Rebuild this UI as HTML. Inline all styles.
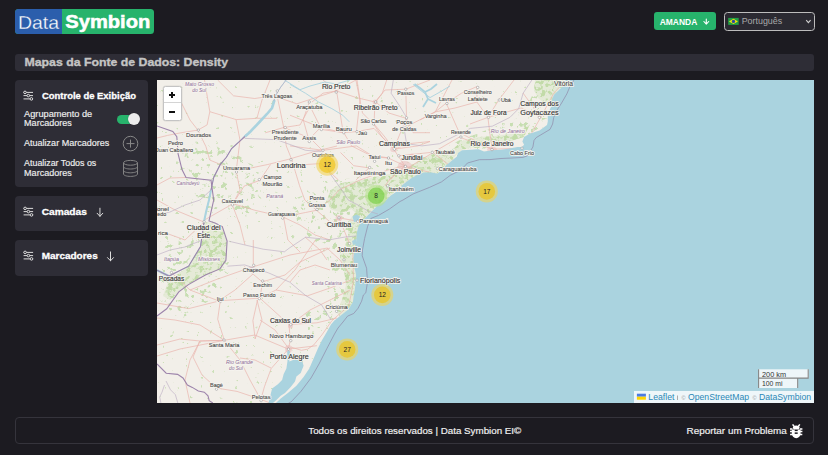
<!DOCTYPE html>
<html><head><meta charset="utf-8">
<style>
*{box-sizing:border-box;margin:0;padding:0}
html,body{width:828px;height:455px;overflow:hidden;background:#1c1b21;font-family:"Liberation Sans",sans-serif;color:#fff}
.a{position:absolute}
.tx{position:absolute;white-space:nowrap;line-height:1}
.card{background:#2e2d36;border-radius:4px;left:15px;width:133px}
#map{left:157px;top:80px;width:657px;height:323px;background:#f2efe9;overflow:hidden}
</style></head><body>
<div class="a" style="left:15px;top:9px;width:139px;height:25px;border-radius:3.5px;overflow:hidden;background:#27b36c"><div class="a" style="left:0;top:0;width:47px;height:25px;background:#2b5eac"></div></div><div class="a" style="left:654px;top:12px;width:62px;height:18px;border-radius:3px;background:#27b36c"></div><div class="a" style="left:724px;top:11.5px;width:91px;height:19.5px;border-radius:3.5px;border:1px solid #bdbdbd;background:#2b2a32"></div><div class="a" style="left:15px;top:54px;width:799px;height:17px;border-radius:3px;background:#2e2d36"></div><div class="a card" style="top:80px;height:107px"></div><div class="a card" style="top:196px;height:35px"></div><div class="a card" style="top:240px;height:36px"></div><div class="a" style="left:15px;top:417px;width:799px;height:27px;border:1px solid #35343c;border-radius:4px"></div><div class="a" style="left:116.5px;top:114.5px;width:21px;height:9px;border-radius:4.5px;background:#27b36c"></div><div class="a" style="left:128.3px;top:113.3px;width:11.4px;height:11.4px;border-radius:6px;background:#ececec;box-shadow:0 0 1px rgba(0,0,0,.4)"></div><div id="map" class="a">
<svg width="657" height="323" viewBox="157 80 657 323" style="position:absolute;left:0;top:0" font-family="Liberation Sans, sans-serif">
<defs><filter id="pt" color-interpolation-filters="sRGB" filterUnits="userSpaceOnUse" x="157" y="80" width="657" height="323"><feTurbulence type="fractalNoise" baseFrequency="0.22" numOctaves="3" seed="7" result="n"/><feColorMatrix in="n" type="matrix" values="0 0 0 0 0.76  0 0 0 0 0.86  0 0 0 0 0.66  9 0 0 0 -4.6" result="m"/><feComposite in="m" in2="SourceGraphic" operator="in"/></filter><filter id="pl" color-interpolation-filters="sRGB" filterUnits="userSpaceOnUse" x="157" y="80" width="657" height="323"><feTurbulence type="fractalNoise" baseFrequency="0.18" numOctaves="3" seed="11" result="n"/><feColorMatrix in="n" type="matrix" values="0 0 0 0 0.78  0 0 0 0 0.87  0 0 0 0 0.70  12 0 0 0 -7.4" result="m"/><feComposite in="m" in2="SourceGraphic" operator="in"/></filter><filter id="ps" color-interpolation-filters="sRGB" filterUnits="userSpaceOnUse" x="157" y="80" width="657" height="323"><feTurbulence type="fractalNoise" baseFrequency="0.2" numOctaves="3" seed="23" result="n"/><feColorMatrix in="n" type="matrix" values="0 0 0 0 0.80  0 0 0 0 0.88  0 0 0 0 0.72  16 0 0 0 -12" result="m"/><feComposite in="m" in2="SourceGraphic" operator="in"/></filter></defs>
<g filter="url(#ps)" fill="#000"><rect x="157" y="80" width="657" height="323"/></g>
<g filter="url(#pl)" fill="#000"><path d="M320,190 L335,180 L355,178 L375,172 L400,165 L430,155 L460,140 L500,125 L530,100 L540,80 L565,80 L547,125 L524,137 L456.9,156.6 L437.1,173.6 L402,185.2 L376.9,206.2 L356.9,232.3 L353.4,257.6 L354.3,292.8 L338.8,317 L310,340 L300,320 L320,300 L330,270 L320,245 L300,230 L290,200 Z"/><path d="M190,140 L230,150 L260,170 L270,200 L250,220 L215,215 L195,195 L180,170 Z"/><path d="M170,240 L200,235 L230,260 L210,300 L180,320 L160,300 L157,260 Z"/></g>
<g fill="#d8e6c6" opacity="0.5"><path d="M330.5,189.9 L341.1,182.9 L355.2,181.1 L365.7,179.3 L378,175.8 L390.3,174.1 L400,172.3 L412,170 L425,166 L437,167 L441.5,170.9 L437.1,173.6 L424,172.5 L410.8,178.6 L402,185.2 L390.8,195.4 L384.6,201.5 L376.9,206.2 L372.3,210.8 L367.7,215.4 L363.1,220 L358.5,226.2 L356.9,232.3 L356.2,241.5 L354.3,250.6 L353.4,257.6 L354.3,266.4 L356.1,275.2 L355.2,285.8 L354.3,292.8 L352.9,302 L347.6,309.9 L340,316 L336,312 L342,300 L346,285 L344,270 L340,258 L344,248 L348,238 L348.1,221.5 L355.2,212.7 L351.6,209.2 L341.1,212.7 L330.5,209.2 L327,200.4 Z"/><path d="M204,222 L215,223 L222,227 L227,241 L226,260 L220,269 L205.4,275 L188.4,284.6 L178.8,291.9 L170,300 L163,296 L168.9,280 L188.6,266.2 L200.5,246.5 Z"/><path d="M452,150 L462,141 L478,137 L495,136 L510,134 L522,129 L530,124 L524,137.1 L510,141 L495,143 L478,146 L462,150 L456,155 Z"/><path d="M535,80 L565,80 L557.7,91.2 L553.7,95.1 L551.8,100.4 L545,104 L538,98 L534,90 Z"/><path d="M400,172.3 L420,160 L440,150 L455,150 L458,153 L451.4,161 L441.5,170.9 L437.1,173.6 L424,172.5 L410.8,178.6 Z"/></g>
<g filter="url(#pt)" fill="#000"><path d="M330.5,189.9 L341.1,182.9 L355.2,181.1 L365.7,179.3 L378,175.8 L390.3,174.1 L400,172.3 L412,170 L425,166 L437,167 L441.5,170.9 L437.1,173.6 L424,172.5 L410.8,178.6 L402,185.2 L390.8,195.4 L384.6,201.5 L376.9,206.2 L372.3,210.8 L367.7,215.4 L363.1,220 L358.5,226.2 L356.9,232.3 L356.2,241.5 L354.3,250.6 L353.4,257.6 L354.3,266.4 L356.1,275.2 L355.2,285.8 L354.3,292.8 L352.9,302 L347.6,309.9 L340,316 L336,312 L342,300 L346,285 L344,270 L340,258 L344,248 L348,238 L348.1,221.5 L355.2,212.7 L351.6,209.2 L341.1,212.7 L330.5,209.2 L327,200.4 Z"/><path d="M204,222 L215,223 L222,227 L227,241 L226,260 L220,269 L205.4,275 L188.4,284.6 L178.8,291.9 L170,300 L163,296 L168.9,280 L188.6,266.2 L200.5,246.5 Z"/><path d="M452,150 L462,141 L478,137 L495,136 L510,134 L522,129 L530,124 L524,137.1 L510,141 L495,143 L478,146 L462,150 L456,155 Z"/><path d="M535,80 L565,80 L557.7,91.2 L553.7,95.1 L551.8,100.4 L545,104 L538,98 L534,90 Z"/><path d="M400,172.3 L420,160 L440,150 L455,150 L458,153 L451.4,161 L441.5,170.9 L437.1,173.6 L424,172.5 L410.8,178.6 Z"/></g>
<g fill="#ecc3c3" opacity="0.6"><ellipse cx="404.7" cy="166" rx="7" ry="5"/><ellipse cx="393.7" cy="149.2" rx="3.5" ry="3"/><ellipse cx="492" cy="149.6" rx="5" ry="3"/><ellipse cx="339" cy="218" rx="3.5" ry="3"/><ellipse cx="288.5" cy="349" rx="3.5" ry="4"/><ellipse cx="290.5" cy="326" rx="2.5" ry="2.5"/><ellipse cx="412" cy="156" rx="3" ry="2.5"/><ellipse cx="375" cy="102" rx="2.5" ry="2.5"/></g>
<g fill="none" stroke="#eab4ad" stroke-width="0.7" stroke-linejoin="round"><path d="M204.5,80 L209.8,111.7 L207.1,124.9 L197.9,130.1 L180.8,132.8 L167.6,135.4 L157,138"/><path d="M209.8,111.7 L236.2,119.6 L257.3,118.3 L277.1,118.3"/><path d="M217.7,80 L233.5,95.8 L254.7,98.5 L273.1,95.8 L296.9,103.8 L337,90.6"/><path d="M277.1,95.8 L283.7,127.5 L286.3,146 L291.6,159.2 L299.5,185.6 L304.8,200 L316.5,210.3 L331.9,223.5 L339,217.8"/><path d="M265.2,132.8 L283.7,127.5 L310.1,138.1 L323.3,151.3"/><path d="M310.1,106.4 L320.6,127.5 L310.1,138.1"/><path d="M289,159.2 L315.4,151.3 L337,146"/><path d="M236.2,171 L267.8,164.5 L289,159.2"/><path d="M259.9,180.3 L270.5,164.5"/><path d="M197.9,130.1 L206,146.8 L209.7,160 L236.2,171"/><path d="M233,203.7 L255,210.3 L283.5,216.9 L305.5,212.5 L316.5,210.3"/><path d="M202.2,221.3 L233,203.7 L244,186.2 L259.9,180.3"/><path d="M283.5,216.9 L287.9,240 L300,252"/><path d="M336.6,91 L356.4,97.6 L375,102"/><path d="M375,102 L374,124 L385,137.1 L393.7,149.2 L404.7,165.7"/><path d="M343.2,132.7 L356.4,131.6 L374,128.4 L393.7,149.2"/><path d="M320.6,127.5 L343.2,132.7"/><path d="M393.7,149.2 L417.9,145.9 L430,141.5"/><path d="M323,150.3 L356.4,145.9 L374,156.9 L388.2,158 L404.7,165.7"/><path d="M404.7,165.7 L389.3,180 L385,186"/><path d="M405.8,89.2 L406.5,117.8 L393.7,149.2"/><path d="M375,102 L385,90 L405.8,89.2 L430,80"/><path d="M357,80 L360,100 L356.4,131.6"/><path d="M476.9,86.6 L476.9,102 L487.9,117.4 L490.1,135 L492.3,149.2"/><path d="M446.2,103.1 L459.3,132.7 L492.3,149.2"/><path d="M404.4,170.1 L433,152.5 L459.3,137.1 L492.3,149.2"/><path d="M492.3,149.2 L523.1,148.1 L540.7,117.4 L553.8,93.2 L566,80"/><path d="M435.2,111.9 L446.2,103.1 L461.5,93.2 L476.9,86.6"/><path d="M400,130 L435.2,111.9 L452,80"/><path d="M498.9,99.8 L487.9,117.4"/><path d="M514,80 L498.9,99.8"/><path d="M433,152.5 L452.7,167.9"/><path d="M470,124 L487.9,117.4 L521,108 L540.7,117.4"/><path d="M420,120 L435.2,111.9 L455,108 L476.9,102"/><path d="M523,93 L540.7,117.4"/><path d="M359.3,240 L353,252 L353,266 L353.5,280 L351,295 L348.6,306 L332,320.5 L321.9,334.9 L313.6,345.1 L307.5,349.2 L301.3,350.3 L291,347"/><path d="M244.1,266.4 L253.3,274.3 L262.6,282.2 L259.9,298.1 L289,324.5 L290.3,340.3 L288.3,349.1"/><path d="M220.3,300.7 L259.9,298.1 L276,290 L295,270 L315.4,240"/><path d="M157,303 L188.7,308.6 L220.3,300.7"/><path d="M224.3,340.3 L254.7,335 L288.3,349.1"/><path d="M224.3,340.3 L217.7,319.2 L220.3,300.7"/><path d="M157,356 L180,349 L224.3,340.3"/><path d="M157,345 L180,339 L200,341 L224.3,340.3"/><path d="M255.2,338.8 L252.9,320.6 L257.5,300"/><path d="M253.3,240 L253.3,266.4"/><path d="M288.3,349.1 L271.2,368.5 L264.4,386.8 L260.9,399.4"/><path d="M216.4,388 L237,391.4 L260.9,399.4 L270,403"/><path d="M216.4,388 L202,375 L193,357 L200,341 L224.3,340.3"/><path d="M288.3,349.1 L316.9,345.7"/><path d="M289,324.5 L316.9,322.8 L337,318"/><path d="M327.4,248 L290,255 L243.7,269.9 L215,280 L190,290"/><path d="M351.3,279.9 L330,288 L307.5,295.8 L276,290"/><path d="M339,217.8 L349.5,243.6"/><path d="M339,217.8 L357.8,221.3"/><path d="M157,200 L175,210 L202.2,221.3"/><path d="M171.5,272.5 L190,290 L220.3,301.5"/><path d="M163,232 L185,240 L204,222"/><path d="M157,185 L170,178 L186,177.5"/><path d="M236.2,171 L240,190 L233,203.7"/><path d="M316.5,210.3 L330,200 L339,190 L360,180 L388,170 L404.7,165.7"/><path d="M336.6,91 L343.2,132.7"/><path d="M310.1,106.4 L300,125 L283.7,127.5"/><path d="M336.2,91 L355.9,80"/><path d="M336.2,91 L323,80"/><path d="M312,102 L323,93.2 L336.2,91"/><path d="M290,115.2 L312,124 L321.9,129.5"/><path d="M343.8,132.7 L351.5,145.9 L369.1,154.7 L388.9,158"/><path d="M355.9,80 L362.5,113 L373.5,124 L382.3,137.1 L394.4,149.2"/><path d="M386.7,80 L382.3,93.2 L375.7,102"/><path d="M375.7,102 L388.9,113 L406.5,118.5"/><path d="M394.4,149.2 L408.7,143.7 L430,141.5"/><path d="M398.8,155.8 L430,152.5"/><path d="M405.4,166.4 L430,172.3"/><path d="M405.4,166.4 L388.9,180"/><path d="M369.1,167.9 L355.9,180"/><path d="M290,145.9 L323,150.3"/><path d="M290,165.7 L320.8,163.5 L338.4,180"/><path d="M340.5,152.5 L353.7,165.7 L369.1,167.9"/><path d="M406.5,118.5 L413.1,132.7 L430,132.7"/><path d="M321.9,129.5 L343.8,132.7"/><path d="M309.3,102 L303.2,119.6 L309.3,141.5"/><path d="M157,318 L175,320 L200,325 L224,340"/><path d="M220,300 L235,290 L253,274"/><path d="M262,282 L285,275 L300,262 L315,255 L330,248"/><path d="M290,325 L310,310 L330,300 L350,290"/><path d="M257,300 L262,320 L255,339"/><path d="M200,341 L190,360 L185,380 L190,403"/><path d="M224,340 L240,360 L250,380 L261,400"/><path d="M271,368 L255,360 L240,358"/><path d="M289,349 L275,330 L260,320"/><path d="M327,248 L340,260 L350,275"/><path d="M305,237 L320,250 L327,260"/><path d="M290,282 L300,270 L315,265 L330,270"/><path d="M232,204 L240,225 L245,245"/><path d="M283,217 L300,225 L315,235 L330,240"/><path d="M257,118 L262,100 L270,80"/><path d="M180,100 L190,120 L197.9,130.1"/><path d="M236,119.6 L240,140 L236.2,171"/></g>
<g fill="none" stroke="#aad3df" stroke-width="0.9"><path d="M286.1,80 L280.8,87 L277.3,92.3 L273.8,101.1 L272,108.1 L266.8,113.4 L259.8,122.2 L251,131 L243.9,136.2 L240.4,140.6 L231.6,148.5 L226.4,157.3 L220.3,164.4 L213.7,177.5 L211,190 L209,200 L204,221.8 L200.5,246.5 L188.6,266.2 L168.9,276.1 L157,270.2"/><path d="M290,84.4 L305.4,93.2 L318.6,102 L331.8,108.6 L342.7,115.2 L349.3,121.8"/><path d="M284.4,80 L300,89.7 L310,86 L325,82 L336,84 L350,80"/><path d="M413,84.4 L430,97.6 L440,92 L450,86"/><path d="M414.5,84 L420,88 L425,92 L431,89 L437,84 M425,92 L428,99 L423,107 M428,99 L436,103" stroke-width="1.8"/><path d="M274.5,100 L272,108 L267,114 L259,122.5 L250,132 L245,136.5" stroke-width="2.6"/><path d="M211,190 L209,200 L206,212 L204,221.8" stroke-width="2"/><path d="M168.9,276.1 L157,270.2" stroke-width="2.2"/></g>
<path fill="#aad3df" d="M565,80 L563,85.9 L557.7,91.2 L553.7,95.1 L551.8,100.4 L552.4,104.4 L549.8,109.6 L547.8,114.9 L547.8,121.5 L547,125 L539.5,130.5 L529.6,133.8 L524.1,137.1 L522.4,141.5 L524.1,144.8 L521.9,147 L517.5,147 L509.8,148.6 L501,149.7 L492.2,150.3 L484,151.4 L478.5,149.2 L470.8,149.8 L462,150.3 L458,153 L456.9,156.6 L451.4,161 L446,165.4 L441.5,170.9 L437.1,173.6 L431.6,172.5 L424,172.5 L418.5,174.2 L410.8,178.6 L402,185.2 L400,189.2 L390.8,195.4 L384.6,201.5 L376.9,206.2 L372.3,210.8 L367.7,215.4 L363.1,220 L358.5,226.2 L356.9,232.3 L356.2,241.5 L354.3,250.6 L353.4,257.6 L354.3,266.4 L356.1,275.2 L355.2,285.8 L354.3,292.8 L353.7,295 L352.9,302 L350.2,306.4 L347.6,309.9 L343.2,313.5 L338.8,317 L334.4,320.5 L331,324.5 L326.5,332.6 L321.8,340.4 L317.9,348.5 L313.6,358.6 L309.3,368.6 L303.6,377.1 L296.4,385.7 L287.9,392.9 L280.7,398.6 L276.4,402.6 L276,403 L814,403 L814,80 Z"/>
<path fill="#aad3df" d="M288.6,350 L290,351.4 L289.3,361.4 L295,359.3 L302.1,360.7 L303.6,365.7 L300.7,372.9 L296.4,376.4 L295,381.4 L290.7,387.1 L285,392.9 L280.7,395.7 L276.4,400 L273,403 L268.5,403 L270.7,394.3 L272.1,388.6 L277.9,384.3 L282.1,380 L283.6,374.3 L286.4,368.6 L287.5,361 L287.2,351.4 Z"/>
<path fill="#aad3df" d="M352.5,216.5 L356.5,214.5 L360,216.5 L358.5,221 L354,222 Z M352,241 L356,239 L357,244 L353,245 Z"/>
<path fill="none" stroke="#8f8aa9" stroke-width="0.7" d="M574,80 L570.2,85.9 L566.9,93.8 L561.6,103 L556.4,111 L553.7,117.6 L552.6,124 L550,129.4 L536.2,137.6 L534,140.4 L532.9,147 L527.4,155.8 L523,157.4 L512,158 L501,158.5 L490,159.6 L479.4,159.7 L467.5,163 L460,170.9 L456.9,172 L450.3,175.3 L441.5,181.9 L429.5,187.4 L413,194 L403,200 L400,201.5 L389.2,209.2 L378.5,215.4 L370.8,218.5 L367.7,226.2 L364.6,238.5 L362.5,250 L362.2,255.8 L366.6,268.2 L367.5,282.2 L365.8,292.8 L363.4,295 L361.6,301.2 L358.1,308.2 L353.7,313.5 L347.6,316.1 L343,322 L338,328 L334.5,334 L327,348.3 L319,364 L311,378 L301,391.3 L291,402 L288.5,403"/>
<g fill="none" stroke="#9d84ab" stroke-width="1.1"><path d="M245,136.5 L240.4,140.6 L231.6,148.5 L226.4,157.3 L220.3,164.4 L213.7,177.5 L211,190"/><path d="M204,221.8 L200.5,246.5 L188.6,266.2 L168.9,276.1 L157,270.2"/><path d="M157,126 L172.8,131.4 L176.8,136.7 L178.1,153.8 L182,169.6 L186,177.5 L211,180.2 L213.7,200 L209,221 L215,223 L222.3,226.6 L227.1,241.1 L225.9,260.4 L219.9,268.9 L205.4,275 L188.4,284.6 L178.8,291.9 L166.7,308.8 L157,316"/><path d="M157,364 L166.2,373.2 L177.6,374.4 L183,378 L187.4,385 L192.3,387.4 L198.3,391 L204.3,392.2 L208,395.9 L209.2,400.7 L212.8,403"/></g>
<g fill="none" stroke="#b9a9c1" stroke-width="0.6"><path d="M164.5,385 L162,392.2 L159.7,397 L160.9,403"/><path d="M166,381 L170.5,389.8 L175.4,394.7 L177.8,403"/><path d="M286.1,80 L280.8,87 L277.3,92.3 L273.8,101.1"/><path d="M244.7,138.4 L260,139 L276.5,139.7 L295,146.3 L305.6,150.3 L321.5,151.6 L326,160 L329.5,172.8 L336,182 L342.8,191.3 L348.1,200 L358,205 L368,211 L378,214"/><path d="M228.8,241.2 L245,245 L263.2,249.2 L284.4,251.8 L289.7,247.8 L305.6,237.2 L329.5,239.8 L345,237 L356.2,236"/><path d="M227.4,266.2 L244.7,264.9 L268.6,272.9 L289.8,282.2 L305.6,295.5 L321.5,304.8 L326,312 L331,320"/><path d="M157,255 L170,250 L185,247 L200,241"/><path d="M157,215 L170,212 L185,205 L200,200 L211,190"/><path d="M393.3,80 L391.1,93.2 L399.9,106.4 L406.5,117.4 L404.4,130.5 L406.6,143.7 L422,145.9 L439.6,143.7 L457.1,134.9 L470.3,128.4 L492.3,126.2 L509.9,117.4 L518.7,108.6 L523.1,93.2 L531.9,80"/></g>
<g fill="#fff" stroke="#888" stroke-width="0.5"><circle cx="198.3" cy="130.1" r="1.2"/><circle cx="277.3" cy="90.9" r="1.2"/><circle cx="285.2" cy="127.5" r="1.2"/><circle cx="336.2" cy="92.1" r="1.2"/><circle cx="309.3" cy="102" r="1.2"/><circle cx="375.7" cy="102" r="1.2"/><circle cx="405.8" cy="89.2" r="1.2"/><circle cx="373.5" cy="124" r="1.2"/><circle cx="406.5" cy="117.8" r="1.2"/><circle cx="321.4" cy="129.5" r="1.2"/><circle cx="343.8" cy="132.7" r="1.2"/><circle cx="357" cy="131.6" r="1.2"/><circle cx="309.3" cy="141.5" r="1.2"/><circle cx="394.4" cy="149.2" r="1.2"/><circle cx="323" cy="150.3" r="1.2"/><circle cx="374.6" cy="161.3" r="1.2"/><circle cx="398.8" cy="155.8" r="1.2"/><circle cx="388.5" cy="158" r="1.2"/><circle cx="369.6" cy="167.5" r="1.2"/><circle cx="405.4" cy="166.4" r="1.2"/><circle cx="477.7" cy="87.4" r="1.2"/><circle cx="499.2" cy="100" r="1.2"/><circle cx="446.9" cy="103.5" r="1.2"/><circle cx="488.5" cy="117.4" r="1.2"/><circle cx="539.4" cy="117.4" r="1.2"/><circle cx="460.9" cy="137" r="1.2"/><circle cx="492" cy="149.6" r="1.2"/><circle cx="522" cy="148.2" r="1.2"/><circle cx="432.2" cy="152.3" r="1.2"/><circle cx="437.5" cy="168.6" r="1.2"/><circle cx="387.7" cy="185.8" r="1.2"/><circle cx="357.8" cy="221.3" r="1.2"/><circle cx="339" cy="217.8" r="1.2"/><circle cx="349.5" cy="243.6" r="1.2"/><circle cx="344" cy="259.8" r="1.2"/><circle cx="357" cy="280.2" r="1.2"/><circle cx="336.6" cy="311.3" r="1.2"/><circle cx="232.4" cy="204.8" r="1.2"/><circle cx="282.7" cy="218.1" r="1.2"/><circle cx="204.1" cy="221.8" r="1.2"/><circle cx="171.5" cy="272.5" r="1.2"/><circle cx="253.7" cy="265.3" r="1.2"/><circle cx="262.7" cy="281" r="1.2"/><circle cx="259.3" cy="298.6" r="1.2"/><circle cx="220.3" cy="301.5" r="1.2"/><circle cx="290.8" cy="324.7" r="1.2"/><circle cx="290.8" cy="340.7" r="1.2"/><circle cx="224" cy="340" r="1.2"/><circle cx="288.5" cy="349.2" r="1.2"/><circle cx="216.5" cy="389.2" r="1.2"/><circle cx="261.1" cy="400.7" r="1.2"/><circle cx="291" cy="159.7" r="1.2"/><circle cx="236.5" cy="172" r="1.2"/><circle cx="259.3" cy="179.6" r="1.2"/><circle cx="317" cy="209.5" r="1.2"/></g>
<g stroke="#f6f4ef" stroke-opacity="0.9" stroke-width="1.8" stroke-linejoin="round" text-anchor="middle"><text x="199.5" y="85.8" font-size="4.97" font-style="italic" textLength="29" lengthAdjust="spacingAndGlyphs" fill="#f6f4ef">Mato Grosso</text><text x="199.2" y="92.2" font-size="4.84" font-style="italic" textLength="14" lengthAdjust="spacingAndGlyphs" fill="#f6f4ef">do Sul</text><text x="198.6" y="136.5" font-size="5.67" textLength="25.1" lengthAdjust="spacingAndGlyphs" fill="#f6f4ef">Dourados</text><text x="175.5" y="145.0" font-size="5.51" textLength="15" lengthAdjust="spacingAndGlyphs" fill="#f6f4ef">Pedro</text><text x="174.6" y="151.9" font-size="5.39" textLength="37" lengthAdjust="spacingAndGlyphs" fill="#f6f4ef">Juan Caballero</text><text x="276.9" y="97.8" font-size="5.47" textLength="30.8" lengthAdjust="spacingAndGlyphs" fill="#f6f4ef">Três Lagoas</text><text x="285.2" y="134.2" font-size="5.54" textLength="27" lengthAdjust="spacingAndGlyphs" fill="#f6f4ef">Presidente</text><text x="285.2" y="140.3" font-size="5.55" textLength="23" lengthAdjust="spacingAndGlyphs" fill="#f6f4ef">Prudente</text><text x="336.2" y="89.0" font-size="6.70" textLength="28.5" lengthAdjust="spacingAndGlyphs" fill="#f6f4ef">Rio Preto</text><text x="309.3" y="109.0" font-size="5.65" textLength="26.3" lengthAdjust="spacingAndGlyphs" fill="#f6f4ef">Araçatuba</text><text x="375.7" y="109.9" font-size="6.75" textLength="44" lengthAdjust="spacingAndGlyphs" fill="#f6f4ef">Ribeirão Preto</text><text x="405.8" y="95.0" font-size="5.08" textLength="17" lengthAdjust="spacingAndGlyphs" fill="#f6f4ef">Passos</text><text x="373.5" y="122.6" font-size="5.15" textLength="26" lengthAdjust="spacingAndGlyphs" fill="#f6f4ef">São Carlos</text><text x="404.3" y="124.4" font-size="5.64" textLength="16" lengthAdjust="spacingAndGlyphs" fill="#f6f4ef">Poços</text><text x="404.3" y="131.4" font-size="5.22" textLength="24" lengthAdjust="spacingAndGlyphs" fill="#f6f4ef">de Caldas</text><text x="321.4" y="127.7" font-size="5.62" textLength="17.2" lengthAdjust="spacingAndGlyphs" fill="#f6f4ef">Marília</text><text x="343.8" y="130.9" font-size="5.88" textLength="16" lengthAdjust="spacingAndGlyphs" fill="#f6f4ef">Bauru</text><text x="362.5" y="134.7" font-size="5.47" textLength="9" lengthAdjust="spacingAndGlyphs" fill="#f6f4ef">Jaú</text><text x="309.3" y="140.3" font-size="5.74" textLength="14" lengthAdjust="spacingAndGlyphs" fill="#f6f4ef">Assis</text><text x="348.2" y="144.0" font-size="5.10" font-style="italic" textLength="24" lengthAdjust="spacingAndGlyphs" fill="#f6f4ef">São Paulo</text><text x="394.4" y="146.1" font-size="6.70" textLength="30.8" lengthAdjust="spacingAndGlyphs" fill="#f6f4ef">Campinas</text><text x="323" y="157.3" font-size="5.31" textLength="22" lengthAdjust="spacingAndGlyphs" fill="#f6f4ef">Ourinhos</text><text x="374.6" y="158.9" font-size="5.42" textLength="12" lengthAdjust="spacingAndGlyphs" fill="#f6f4ef">Tatuí</text><text x="412" y="159.7" font-size="6.38" textLength="21" lengthAdjust="spacingAndGlyphs" fill="#f6f4ef">Jundiaí</text><text x="388.5" y="165.1" font-size="6.17" textLength="7" lengthAdjust="spacingAndGlyphs" fill="#f6f4ef">Itu</text><text x="291.2" y="167.9" font-size="7.23" textLength="28.7" lengthAdjust="spacingAndGlyphs" fill="#f6f4ef">Londrina</text><text x="369.6" y="174.5" font-size="6.05" textLength="31.9" lengthAdjust="spacingAndGlyphs" fill="#f6f4ef">Itapetininga</text><text x="405.4" y="174.3" font-size="6.54" textLength="30.8" lengthAdjust="spacingAndGlyphs" fill="#f6f4ef">São Paulo</text><text x="563.5" y="85.8" font-size="6.61" textLength="19" lengthAdjust="spacingAndGlyphs" fill="#f6f4ef">Vitória</text><text x="477.7" y="93.9" font-size="5.14" textLength="28" lengthAdjust="spacingAndGlyphs" fill="#f6f4ef">Conselheiro</text><text x="477.7" y="100.6" font-size="5.51" textLength="20" lengthAdjust="spacingAndGlyphs" fill="#f6f4ef">Lafaiete</text><text x="505.9" y="101.9" font-size="5.34" textLength="10" lengthAdjust="spacingAndGlyphs" fill="#f6f4ef">Ubá</text><text x="446.9" y="100.8" font-size="5.22" textLength="16" lengthAdjust="spacingAndGlyphs" fill="#f6f4ef">Lavras</text><text x="488.5" y="114.6" font-size="6.45" textLength="36.2" lengthAdjust="spacingAndGlyphs" fill="#f6f4ef">Juiz de Fora</text><text x="539.4" y="106.4" font-size="6.69" textLength="38.3" lengthAdjust="spacingAndGlyphs" fill="#f6f4ef">Campos dos</text><text x="539.4" y="114.6" font-size="7.11" textLength="38.3" lengthAdjust="spacingAndGlyphs" fill="#f6f4ef">Goytacazes</text><text x="435.7" y="118.0" font-size="5.49" textLength="22" lengthAdjust="spacingAndGlyphs" fill="#f6f4ef">Varginha</text><text x="460.9" y="134.2" font-size="4.90" textLength="20" lengthAdjust="spacingAndGlyphs" fill="#f6f4ef">Resende</text><text x="507.8" y="132.7" font-size="5.17" font-style="italic" textLength="34" lengthAdjust="spacingAndGlyphs" fill="#f6f4ef">Rio de Janeiro</text><text x="492" y="146.1" font-size="6.57" textLength="43.2" lengthAdjust="spacingAndGlyphs" fill="#f6f4ef">Rio de Janeiro</text><text x="522" y="154.9" font-size="5.36" textLength="24" lengthAdjust="spacingAndGlyphs" fill="#f6f4ef">Cabo Frio</text><text x="445" y="154.3" font-size="5.51" textLength="20" lengthAdjust="spacingAndGlyphs" fill="#f6f4ef">Taubaté</text><text x="457.6" y="170.6" font-size="5.63" textLength="38" lengthAdjust="spacingAndGlyphs" fill="#f6f4ef">Caraguatatuba</text><text x="236.5" y="169.9" font-size="5.35" textLength="27" lengthAdjust="spacingAndGlyphs" fill="#f6f4ef">Umuarama</text><text x="272.4" y="179.2" font-size="5.47" textLength="18" lengthAdjust="spacingAndGlyphs" fill="#f6f4ef">Campo</text><text x="272.4" y="185.7" font-size="5.78" textLength="20" lengthAdjust="spacingAndGlyphs" fill="#f6f4ef">Mourão</text><text x="187.9" y="185.3" font-size="4.71" font-style="italic" textLength="23" lengthAdjust="spacingAndGlyphs" fill="#f6f4ef">Canindeyú</text><text x="401.2" y="190.6" font-size="5.90" textLength="25.1" lengthAdjust="spacingAndGlyphs" fill="#f6f4ef">Itanhaém</text><text x="274.8" y="198.3" font-size="5.17" font-style="italic" textLength="17" lengthAdjust="spacingAndGlyphs" fill="#f6f4ef">Paraná</text><text x="232.4" y="203.0" font-size="5.05" textLength="21.2" lengthAdjust="spacingAndGlyphs" fill="#f6f4ef">Cascavel</text><text x="317" y="200.4" font-size="5.63" textLength="15" lengthAdjust="spacingAndGlyphs" fill="#f6f4ef">Ponta</text><text x="317" y="206.9" font-size="5.17" textLength="17" lengthAdjust="spacingAndGlyphs" fill="#f6f4ef">Grossa</text><text x="281.5" y="215.5" font-size="4.81" textLength="27" lengthAdjust="spacingAndGlyphs" fill="#f6f4ef">Guarapuava</text><text x="373.6" y="223.4" font-size="5.75" textLength="28.7" lengthAdjust="spacingAndGlyphs" fill="#f6f4ef">Paranaguá</text><text x="339" y="227.0" font-size="7.00" textLength="24.6" lengthAdjust="spacingAndGlyphs" fill="#f6f4ef">Curitiba</text><text x="203.7" y="229.6" font-size="6.93" textLength="33.8" lengthAdjust="spacingAndGlyphs" fill="#f6f4ef">Ciudad del</text><text x="203.7" y="237.8" font-size="6.37" textLength="13" lengthAdjust="spacingAndGlyphs" fill="#f6f4ef">Este</text><text x="349" y="251.9" font-size="6.56" textLength="23.8" lengthAdjust="spacingAndGlyphs" fill="#f6f4ef">Joinville</text><text x="344" y="267.2" font-size="5.81" textLength="26.7" lengthAdjust="spacingAndGlyphs" fill="#f6f4ef">Blumenau</text><text x="326.7" y="285.2" font-size="4.41" font-style="italic" textLength="30" lengthAdjust="spacingAndGlyphs" fill="#f6f4ef">Santa Catarina</text><text x="380.2" y="282.5" font-size="6.95" textLength="40.2" lengthAdjust="spacingAndGlyphs" fill="#f6f4ef">Florianópolis</text><text x="336.6" y="309.1" font-size="5.56" textLength="22.4" lengthAdjust="spacingAndGlyphs" fill="#f6f4ef">Criciúma</text><text x="171.5" y="261.1" font-size="5.29" font-style="italic" textLength="15" lengthAdjust="spacingAndGlyphs" fill="#f6f4ef">Itapúa</text><text x="209" y="260.5" font-size="5.46" font-style="italic" textLength="22" lengthAdjust="spacingAndGlyphs" fill="#f6f4ef">Misiones</text><text x="171.5" y="281.4" font-size="6.37" textLength="25.3" lengthAdjust="spacingAndGlyphs" fill="#f6f4ef">Posadas</text><text x="253.7" y="272.0" font-size="5.34" textLength="21.8" lengthAdjust="spacingAndGlyphs" fill="#f6f4ef">Chapecó</text><text x="262.7" y="286.9" font-size="5.08" textLength="19" lengthAdjust="spacingAndGlyphs" fill="#f6f4ef">Erechim</text><text x="259.3" y="296.8" font-size="5.42" textLength="32.6" lengthAdjust="spacingAndGlyphs" fill="#f6f4ef">Passo Fundo</text><text x="220.3" y="300.5" font-size="5.14" textLength="7" lengthAdjust="spacingAndGlyphs" fill="#f6f4ef">Ijuí</text><text x="290.5" y="322.5" font-size="6.53" textLength="41.1" lengthAdjust="spacingAndGlyphs" fill="#f6f4ef">Caxias do Sul</text><text x="291.4" y="338.2" font-size="5.88" textLength="43.7" lengthAdjust="spacingAndGlyphs" fill="#f6f4ef">Novo Hamburgo</text><text x="224" y="346.6" font-size="5.58" textLength="30.7" lengthAdjust="spacingAndGlyphs" fill="#f6f4ef">Santa Maria</text><text x="239.4" y="363.7" font-size="5.17" font-style="italic" textLength="27" lengthAdjust="spacingAndGlyphs" fill="#f6f4ef">Rio Grande</text><text x="235.9" y="369.9" font-size="4.84" font-style="italic" textLength="14" lengthAdjust="spacingAndGlyphs" fill="#f6f4ef">do Sul</text><text x="289.2" y="358.5" font-size="6.96" textLength="39.1" lengthAdjust="spacingAndGlyphs" fill="#f6f4ef">Porto Alegre</text><text x="216.5" y="386.5" font-size="5.41" textLength="12.9" lengthAdjust="spacingAndGlyphs" fill="#f6f4ef">Bagé</text><text x="261.1" y="399.2" font-size="5.49" textLength="18.7" lengthAdjust="spacingAndGlyphs" fill="#f6f4ef">Pelotas</text><text x="163" y="210.7" font-size="6.22" textLength="12" lengthAdjust="spacingAndGlyphs" fill="#f6f4ef">onel</text><text x="161.8" y="216.4" font-size="5.29" textLength="9" lengthAdjust="spacingAndGlyphs" fill="#f6f4ef">edo</text><text x="163" y="234.8" font-size="6.08" textLength="10" lengthAdjust="spacingAndGlyphs" fill="#f6f4ef">rica</text></g><g text-anchor="middle"><text x="199.5" y="85.8" font-size="4.97" font-style="italic" textLength="29" lengthAdjust="spacingAndGlyphs" fill="#8e6e98">Mato Grosso</text><text x="199.2" y="92.2" font-size="4.84" font-style="italic" textLength="14" lengthAdjust="spacingAndGlyphs" fill="#8e6e98">do Sul</text><text x="198.6" y="136.5" font-size="5.67" textLength="25.1" lengthAdjust="spacingAndGlyphs" fill="#474747" stroke="#474747" stroke-width="0.08">Dourados</text><text x="175.5" y="145.0" font-size="5.51" textLength="15" lengthAdjust="spacingAndGlyphs" fill="#474747" stroke="#474747" stroke-width="0.08">Pedro</text><text x="174.6" y="151.9" font-size="5.39" textLength="37" lengthAdjust="spacingAndGlyphs" fill="#474747" stroke="#474747" stroke-width="0.08">Juan Caballero</text><text x="276.9" y="97.8" font-size="5.47" textLength="30.8" lengthAdjust="spacingAndGlyphs" fill="#474747" stroke="#474747" stroke-width="0.08">Três Lagoas</text><text x="285.2" y="134.2" font-size="5.54" textLength="27" lengthAdjust="spacingAndGlyphs" fill="#474747" stroke="#474747" stroke-width="0.08">Presidente</text><text x="285.2" y="140.3" font-size="5.55" textLength="23" lengthAdjust="spacingAndGlyphs" fill="#474747" stroke="#474747" stroke-width="0.08">Prudente</text><text x="336.2" y="89.0" font-size="6.70" textLength="28.5" lengthAdjust="spacingAndGlyphs" fill="#383838" stroke="#383838" stroke-width="0.15">Rio Preto</text><text x="309.3" y="109.0" font-size="5.65" textLength="26.3" lengthAdjust="spacingAndGlyphs" fill="#474747" stroke="#474747" stroke-width="0.08">Araçatuba</text><text x="375.7" y="109.9" font-size="6.75" textLength="44" lengthAdjust="spacingAndGlyphs" fill="#383838" stroke="#383838" stroke-width="0.15">Ribeirão Preto</text><text x="405.8" y="95.0" font-size="5.08" textLength="17" lengthAdjust="spacingAndGlyphs" fill="#474747" stroke="#474747" stroke-width="0.08">Passos</text><text x="373.5" y="122.6" font-size="5.15" textLength="26" lengthAdjust="spacingAndGlyphs" fill="#474747" stroke="#474747" stroke-width="0.08">São Carlos</text><text x="404.3" y="124.4" font-size="5.64" textLength="16" lengthAdjust="spacingAndGlyphs" fill="#474747" stroke="#474747" stroke-width="0.08">Poços</text><text x="404.3" y="131.4" font-size="5.22" textLength="24" lengthAdjust="spacingAndGlyphs" fill="#474747" stroke="#474747" stroke-width="0.08">de Caldas</text><text x="321.4" y="127.7" font-size="5.62" textLength="17.2" lengthAdjust="spacingAndGlyphs" fill="#474747" stroke="#474747" stroke-width="0.08">Marília</text><text x="343.8" y="130.9" font-size="5.88" textLength="16" lengthAdjust="spacingAndGlyphs" fill="#474747" stroke="#474747" stroke-width="0.08">Bauru</text><text x="362.5" y="134.7" font-size="5.47" textLength="9" lengthAdjust="spacingAndGlyphs" fill="#474747" stroke="#474747" stroke-width="0.08">Jaú</text><text x="309.3" y="140.3" font-size="5.74" textLength="14" lengthAdjust="spacingAndGlyphs" fill="#474747" stroke="#474747" stroke-width="0.08">Assis</text><text x="348.2" y="144.0" font-size="5.10" font-style="italic" textLength="24" lengthAdjust="spacingAndGlyphs" fill="#8e6e98">São Paulo</text><text x="394.4" y="146.1" font-size="6.70" textLength="30.8" lengthAdjust="spacingAndGlyphs" fill="#383838" stroke="#383838" stroke-width="0.15">Campinas</text><text x="323" y="157.3" font-size="5.31" textLength="22" lengthAdjust="spacingAndGlyphs" fill="#474747" stroke="#474747" stroke-width="0.08">Ourinhos</text><text x="374.6" y="158.9" font-size="5.42" textLength="12" lengthAdjust="spacingAndGlyphs" fill="#474747" stroke="#474747" stroke-width="0.08">Tatuí</text><text x="412" y="159.7" font-size="6.38" textLength="21" lengthAdjust="spacingAndGlyphs" fill="#383838" stroke="#383838" stroke-width="0.15">Jundiaí</text><text x="388.5" y="165.1" font-size="6.17" textLength="7" lengthAdjust="spacingAndGlyphs" fill="#474747" stroke="#474747" stroke-width="0.08">Itu</text><text x="291.2" y="167.9" font-size="7.23" textLength="28.7" lengthAdjust="spacingAndGlyphs" fill="#383838" stroke="#383838" stroke-width="0.15">Londrina</text><text x="369.6" y="174.5" font-size="6.05" textLength="31.9" lengthAdjust="spacingAndGlyphs" fill="#474747" stroke="#474747" stroke-width="0.08">Itapetininga</text><text x="405.4" y="174.3" font-size="6.54" textLength="30.8" lengthAdjust="spacingAndGlyphs" fill="#383838" stroke="#383838" stroke-width="0.15">São Paulo</text><text x="563.5" y="85.8" font-size="6.61" textLength="19" lengthAdjust="spacingAndGlyphs" fill="#474747" stroke="#474747" stroke-width="0.08">Vitória</text><text x="477.7" y="93.9" font-size="5.14" textLength="28" lengthAdjust="spacingAndGlyphs" fill="#474747" stroke="#474747" stroke-width="0.08">Conselheiro</text><text x="477.7" y="100.6" font-size="5.51" textLength="20" lengthAdjust="spacingAndGlyphs" fill="#474747" stroke="#474747" stroke-width="0.08">Lafaiete</text><text x="505.9" y="101.9" font-size="5.34" textLength="10" lengthAdjust="spacingAndGlyphs" fill="#474747" stroke="#474747" stroke-width="0.08">Ubá</text><text x="446.9" y="100.8" font-size="5.22" textLength="16" lengthAdjust="spacingAndGlyphs" fill="#474747" stroke="#474747" stroke-width="0.08">Lavras</text><text x="488.5" y="114.6" font-size="6.45" textLength="36.2" lengthAdjust="spacingAndGlyphs" fill="#383838" stroke="#383838" stroke-width="0.15">Juiz de Fora</text><text x="539.4" y="106.4" font-size="6.69" textLength="38.3" lengthAdjust="spacingAndGlyphs" fill="#383838" stroke="#383838" stroke-width="0.15">Campos dos</text><text x="539.4" y="114.6" font-size="7.11" textLength="38.3" lengthAdjust="spacingAndGlyphs" fill="#383838" stroke="#383838" stroke-width="0.15">Goytacazes</text><text x="435.7" y="118.0" font-size="5.49" textLength="22" lengthAdjust="spacingAndGlyphs" fill="#474747" stroke="#474747" stroke-width="0.08">Varginha</text><text x="460.9" y="134.2" font-size="4.90" textLength="20" lengthAdjust="spacingAndGlyphs" fill="#474747" stroke="#474747" stroke-width="0.08">Resende</text><text x="507.8" y="132.7" font-size="5.17" font-style="italic" textLength="34" lengthAdjust="spacingAndGlyphs" fill="#8e6e98">Rio de Janeiro</text><text x="492" y="146.1" font-size="6.57" textLength="43.2" lengthAdjust="spacingAndGlyphs" fill="#383838" stroke="#383838" stroke-width="0.15">Rio de Janeiro</text><text x="522" y="154.9" font-size="5.36" textLength="24" lengthAdjust="spacingAndGlyphs" fill="#474747" stroke="#474747" stroke-width="0.08">Cabo Frio</text><text x="445" y="154.3" font-size="5.51" textLength="20" lengthAdjust="spacingAndGlyphs" fill="#474747" stroke="#474747" stroke-width="0.08">Taubaté</text><text x="457.6" y="170.6" font-size="5.63" textLength="38" lengthAdjust="spacingAndGlyphs" fill="#474747" stroke="#474747" stroke-width="0.08">Caraguatatuba</text><text x="236.5" y="169.9" font-size="5.35" textLength="27" lengthAdjust="spacingAndGlyphs" fill="#474747" stroke="#474747" stroke-width="0.08">Umuarama</text><text x="272.4" y="179.2" font-size="5.47" textLength="18" lengthAdjust="spacingAndGlyphs" fill="#474747" stroke="#474747" stroke-width="0.08">Campo</text><text x="272.4" y="185.7" font-size="5.78" textLength="20" lengthAdjust="spacingAndGlyphs" fill="#474747" stroke="#474747" stroke-width="0.08">Mourão</text><text x="187.9" y="185.3" font-size="4.71" font-style="italic" textLength="23" lengthAdjust="spacingAndGlyphs" fill="#8e6e98">Canindeyú</text><text x="401.2" y="190.6" font-size="5.90" textLength="25.1" lengthAdjust="spacingAndGlyphs" fill="#474747" stroke="#474747" stroke-width="0.08">Itanhaém</text><text x="274.8" y="198.3" font-size="5.17" font-style="italic" textLength="17" lengthAdjust="spacingAndGlyphs" fill="#8e6e98">Paraná</text><text x="232.4" y="203.0" font-size="5.05" textLength="21.2" lengthAdjust="spacingAndGlyphs" fill="#474747" stroke="#474747" stroke-width="0.08">Cascavel</text><text x="317" y="200.4" font-size="5.63" textLength="15" lengthAdjust="spacingAndGlyphs" fill="#474747" stroke="#474747" stroke-width="0.08">Ponta</text><text x="317" y="206.9" font-size="5.17" textLength="17" lengthAdjust="spacingAndGlyphs" fill="#474747" stroke="#474747" stroke-width="0.08">Grossa</text><text x="281.5" y="215.5" font-size="4.81" textLength="27" lengthAdjust="spacingAndGlyphs" fill="#474747" stroke="#474747" stroke-width="0.08">Guarapuava</text><text x="373.6" y="223.4" font-size="5.75" textLength="28.7" lengthAdjust="spacingAndGlyphs" fill="#474747" stroke="#474747" stroke-width="0.08">Paranaguá</text><text x="339" y="227.0" font-size="7.00" textLength="24.6" lengthAdjust="spacingAndGlyphs" fill="#383838" stroke="#383838" stroke-width="0.15">Curitiba</text><text x="203.7" y="229.6" font-size="6.93" textLength="33.8" lengthAdjust="spacingAndGlyphs" fill="#383838" stroke="#383838" stroke-width="0.15">Ciudad del</text><text x="203.7" y="237.8" font-size="6.37" textLength="13" lengthAdjust="spacingAndGlyphs" fill="#383838" stroke="#383838" stroke-width="0.15">Este</text><text x="349" y="251.9" font-size="6.56" textLength="23.8" lengthAdjust="spacingAndGlyphs" fill="#383838" stroke="#383838" stroke-width="0.15">Joinville</text><text x="344" y="267.2" font-size="5.81" textLength="26.7" lengthAdjust="spacingAndGlyphs" fill="#474747" stroke="#474747" stroke-width="0.08">Blumenau</text><text x="326.7" y="285.2" font-size="4.41" font-style="italic" textLength="30" lengthAdjust="spacingAndGlyphs" fill="#8e6e98">Santa Catarina</text><text x="380.2" y="282.5" font-size="6.95" textLength="40.2" lengthAdjust="spacingAndGlyphs" fill="#383838" stroke="#383838" stroke-width="0.15">Florianópolis</text><text x="336.6" y="309.1" font-size="5.56" textLength="22.4" lengthAdjust="spacingAndGlyphs" fill="#474747" stroke="#474747" stroke-width="0.08">Criciúma</text><text x="171.5" y="261.1" font-size="5.29" font-style="italic" textLength="15" lengthAdjust="spacingAndGlyphs" fill="#8e6e98">Itapúa</text><text x="209" y="260.5" font-size="5.46" font-style="italic" textLength="22" lengthAdjust="spacingAndGlyphs" fill="#8e6e98">Misiones</text><text x="171.5" y="281.4" font-size="6.37" textLength="25.3" lengthAdjust="spacingAndGlyphs" fill="#383838" stroke="#383838" stroke-width="0.15">Posadas</text><text x="253.7" y="272.0" font-size="5.34" textLength="21.8" lengthAdjust="spacingAndGlyphs" fill="#474747" stroke="#474747" stroke-width="0.08">Chapecó</text><text x="262.7" y="286.9" font-size="5.08" textLength="19" lengthAdjust="spacingAndGlyphs" fill="#474747" stroke="#474747" stroke-width="0.08">Erechim</text><text x="259.3" y="296.8" font-size="5.42" textLength="32.6" lengthAdjust="spacingAndGlyphs" fill="#474747" stroke="#474747" stroke-width="0.08">Passo Fundo</text><text x="220.3" y="300.5" font-size="5.14" textLength="7" lengthAdjust="spacingAndGlyphs" fill="#474747" stroke="#474747" stroke-width="0.08">Ijuí</text><text x="290.5" y="322.5" font-size="6.53" textLength="41.1" lengthAdjust="spacingAndGlyphs" fill="#383838" stroke="#383838" stroke-width="0.15">Caxias do Sul</text><text x="291.4" y="338.2" font-size="5.88" textLength="43.7" lengthAdjust="spacingAndGlyphs" fill="#474747" stroke="#474747" stroke-width="0.08">Novo Hamburgo</text><text x="224" y="346.6" font-size="5.58" textLength="30.7" lengthAdjust="spacingAndGlyphs" fill="#474747" stroke="#474747" stroke-width="0.08">Santa Maria</text><text x="239.4" y="363.7" font-size="5.17" font-style="italic" textLength="27" lengthAdjust="spacingAndGlyphs" fill="#8e6e98">Rio Grande</text><text x="235.9" y="369.9" font-size="4.84" font-style="italic" textLength="14" lengthAdjust="spacingAndGlyphs" fill="#8e6e98">do Sul</text><text x="289.2" y="358.5" font-size="6.96" textLength="39.1" lengthAdjust="spacingAndGlyphs" fill="#383838" stroke="#383838" stroke-width="0.15">Porto Alegre</text><text x="216.5" y="386.5" font-size="5.41" textLength="12.9" lengthAdjust="spacingAndGlyphs" fill="#474747" stroke="#474747" stroke-width="0.08">Bagé</text><text x="261.1" y="399.2" font-size="5.49" textLength="18.7" lengthAdjust="spacingAndGlyphs" fill="#474747" stroke="#474747" stroke-width="0.08">Pelotas</text><text x="163" y="210.7" font-size="6.22" textLength="12" lengthAdjust="spacingAndGlyphs" fill="#474747" stroke="#474747" stroke-width="0.08">onel</text><text x="161.8" y="216.4" font-size="5.29" textLength="9" lengthAdjust="spacingAndGlyphs" fill="#474747" stroke="#474747" stroke-width="0.08">edo</text><text x="163" y="234.8" font-size="6.08" textLength="10" lengthAdjust="spacingAndGlyphs" fill="#474747" stroke="#474747" stroke-width="0.08">rica</text></g>
<circle cx="327.2" cy="164.7" r="11" fill="rgba(241,211,87,0.6)"/><circle cx="327.2" cy="164.7" r="8.3" fill="rgba(240,194,12,0.6)"/><text x="327.2" y="167.1" font-size="6.6" fill="#222" text-anchor="middle">12</text><circle cx="376.2" cy="195.8" r="11" fill="rgba(181,226,140,0.6)"/><circle cx="376.2" cy="195.8" r="8.3" fill="rgba(110,204,57,0.6)"/><text x="376.2" y="198.2" font-size="6.6" fill="#222" text-anchor="middle">8</text><circle cx="486.8" cy="191.4" r="11" fill="rgba(241,211,87,0.6)"/><circle cx="486.8" cy="191.4" r="8.3" fill="rgba(240,194,12,0.6)"/><text x="486.8" y="193.8" font-size="6.6" fill="#222" text-anchor="middle">17</text><circle cx="382.3" cy="294.9" r="11" fill="rgba(241,211,87,0.6)"/><circle cx="382.3" cy="294.9" r="8.3" fill="rgba(240,194,12,0.6)"/><text x="382.3" y="297.3" font-size="6.6" fill="#222" text-anchor="middle">12</text><circle cx="347.2" cy="349.4" r="11" fill="rgba(241,211,87,0.6)"/><circle cx="347.2" cy="349.4" r="8.3" fill="rgba(240,194,12,0.6)"/><text x="347.2" y="351.8" font-size="6.6" fill="#222" text-anchor="middle">27</text>
</svg>
<div class="a" style="left:6px;top:6px;width:18.5px;height:35px;border:1px solid #c4c4c4;border-radius:2.5px;background:#fff;box-shadow:0 0 0 0.5px rgba(0,0,0,.08)">
<div class="a" style="left:0;top:15.3px;width:16.5px;height:1px;background:#d4d4d4"></div>
<div class="a" style="left:5.1px;top:7.4px;width:6.4px;height:1.8px;background:#111"></div>
<div class="a" style="left:7.4px;top:5.1px;width:1.8px;height:6.4px;background:#111"></div>
<div class="a" style="left:5.4px;top:23.9px;width:5.8px;height:1.7px;background:#111"></div>
</div>
</div>
<svg class="a" style="left:0;top:0" width="828" height="455" viewBox="0 0 828 455" font-family="Liberation Sans, sans-serif"><text x="17.9" y="28.5" font-size="19.27" fill="#fff" textLength="41.2" lengthAdjust="spacingAndGlyphs" stroke="#2b5eac" stroke-width="0.3">Data</text><text x="65.3" y="27.9" font-size="17.74" font-weight="bold" fill="#fff" textLength="85" lengthAdjust="spacingAndGlyphs" stroke="#fff" stroke-width="0.5">Symbion</text><text x="659.7" y="24.7" font-size="9.22" font-weight="bold" fill="#fff" textLength="37.6" lengthAdjust="spacingAndGlyphs">AMANDA</text><path d="M706.3 19.1V24.1 M703.9 21.5L706.3 24.1L708.7 21.5" fill="none" stroke="#fff" stroke-width="1.1" stroke-linecap="round" stroke-linejoin="round"/><rect x="728.2" y="17.9" width="10.5" height="7" fill="#229e45"/><path d="M733.45 18.7L737.9 21.4L733.45 24.1L729 21.4Z" fill="#f8e509"/><circle cx="733.45" cy="21.4" r="1.7" fill="#2b49a3"/><text x="741.7" y="24.3" font-size="8.94" fill="#a9a9a9" textLength="40.5" lengthAdjust="spacingAndGlyphs">Português</text><path d="M806.2 20.2L808.4 22.6L810.6 20.2" fill="none" stroke="#d0d0d0" stroke-width="1.1"/><text x="24.5" y="65.9" font-size="11.17" font-weight="bold" fill="#c4c4c4" textLength="203.5" lengthAdjust="spacingAndGlyphs" stroke="#c4c4c4" stroke-width="0.35">Mapas da Fonte de Dados: Density</text><g fill="none" stroke="#dcdcdc" stroke-width="1"><path d="M23.5 92.4H33 M23.5 95.6H33 M23.5 98.9H33"/><circle cx="25" cy="92.4" r="1.3" fill="#2e2d36"/><circle cx="28.3" cy="95.6" r="1.3" fill="#2e2d36"/><circle cx="31.4" cy="98.9" r="1.3" fill="#2e2d36"/></g><text x="42" y="98.8" font-size="9.08" font-weight="bold" fill="#fff" textLength="93.9" lengthAdjust="spacingAndGlyphs" stroke="#fff" stroke-width="0.3">Controle de Exibição</text><text x="24.1" y="117.2" font-size="8.80" fill="#ececec" textLength="68.1" lengthAdjust="spacingAndGlyphs" stroke="#ececec" stroke-width="0.18">Agrupamento de</text><text x="24.1" y="125.5" font-size="8.80" fill="#ececec" textLength="47.7" lengthAdjust="spacingAndGlyphs" stroke="#ececec" stroke-width="0.18">Marcadores</text><text x="24.1" y="146.2" font-size="8.80" fill="#ececec" textLength="85.1" lengthAdjust="spacingAndGlyphs" stroke="#ececec" stroke-width="0.18">Atualizar Marcadores</text><text x="24.1" y="166.1" font-size="8.80" fill="#ececec" textLength="72.2" lengthAdjust="spacingAndGlyphs" stroke="#ececec" stroke-width="0.18">Atualizar Todos os</text><text x="24.1" y="175.5" font-size="8.80" fill="#ececec" textLength="47.7" lengthAdjust="spacingAndGlyphs" stroke="#ececec" stroke-width="0.18">Marcadores</text><g fill="none" stroke="#888" stroke-width="1"><circle cx="130.5" cy="143.6" r="7.3"/><path d="M130.5 139.6V147.6M126.5 143.6H134.5"/></g><g fill="none" stroke="#838383" stroke-width="1"><ellipse cx="130.5" cy="162.8" rx="7" ry="2.4"/><path d="M123.5 162.8V174C123.5 175.4 126.6 176.4 130.5 176.4S137.5 175.4 137.5 174V162.8M123.5 166.6C123.5 168 126.6 169 130.5 169S137.5 168 137.5 166.6M123.5 170.4C123.5 171.8 126.6 172.8 130.5 172.8S137.5 171.8 137.5 170.4"/></g><g fill="none" stroke="#dcdcdc" stroke-width="1"><path d="M23.6 208.4H33.1 M23.6 211.6H33.1 M23.6 214.9H33.1"/><circle cx="25.1" cy="208.4" r="1.3" fill="#2e2d36"/><circle cx="28.4" cy="211.6" r="1.3" fill="#2e2d36"/><circle cx="31.5" cy="214.9" r="1.3" fill="#2e2d36"/></g><text x="41.7" y="215" font-size="9.64" font-weight="bold" fill="#fff" textLength="45.2" lengthAdjust="spacingAndGlyphs" stroke="#fff" stroke-width="0.3">Camadas</text><path d="M99.95 208.2V216.3 M97.1 213.25L99.95 216.3L102.8 213.25" fill="none" stroke="#dcdcdc" stroke-width="1" stroke-linecap="round" stroke-linejoin="round"/><g fill="none" stroke="#dcdcdc" stroke-width="1"><path d="M23.6 252.4H33.1 M23.6 255.6H33.1 M23.6 258.9H33.1"/><circle cx="25.1" cy="252.4" r="1.3" fill="#2e2d36"/><circle cx="28.4" cy="255.6" r="1.3" fill="#2e2d36"/><circle cx="31.5" cy="258.9" r="1.3" fill="#2e2d36"/></g><text x="41.7" y="259.4" font-size="9.64" font-weight="bold" fill="#fff" textLength="56" lengthAdjust="spacingAndGlyphs" stroke="#fff" stroke-width="0.3">Marcadores</text><path d="M110.5 251.9V260.8 M107.5 257.6L110.5 260.8L113.5 257.6" fill="none" stroke="#dcdcdc" stroke-width="1" stroke-linecap="round" stroke-linejoin="round"/><text x="308.3" y="433.6" font-size="9.08" fill="#efefef" textLength="213" lengthAdjust="spacingAndGlyphs" stroke="#efefef" stroke-width="0.18">Todos os direitos reservados | Data Symbion EI©</text><text x="686.6" y="433.8" font-size="9.22" fill="#efefef" textLength="100.2" lengthAdjust="spacingAndGlyphs" stroke="#efefef" stroke-width="0.18">Reportar um Problema</text><g fill="#fff"><ellipse cx="796.2" cy="427.6" rx="3.3" ry="2.2"/><path d="M791.8 429.5H800.6V433.6A4.4 4.6 0 0 1 791.8 433.6Z"/></g><g fill="none" stroke="#fff" stroke-width="1.5" stroke-linecap="butt"><path d="M794 426.2L792.6 424.4M798.4 426.2L799.8 424.4M790 429H792.5M802.4 429H799.9M790 431.6H792.5M802.4 431.6H799.9M790.1 434.6H792.5M802.3 434.6H799.9"/></g><g fill="#1c1b21"><rect x="794.7" y="429.6" width="3" height="1.5"/><rect x="794.7" y="432.4" width="3" height="1.5"/></g><rect x="634" y="391" width="180" height="12" fill="rgba(255,255,255,0.8)"/><rect x="636.9" y="393.7" width="9" height="3" fill="#4C7BE1"/><rect x="636.9" y="396.7" width="9" height="3" fill="#FFD500"/><text x="648.3" y="399.7" font-size="8.80" fill="#2a87b6" textLength="26.1" lengthAdjust="spacingAndGlyphs">Leaflet</text><rect x="677" y="395.5" width="0.8" height="4.5" fill="#999"/><text x="681.4" y="399.6" font-size="5.31" fill="#999" textLength="4" lengthAdjust="spacingAndGlyphs">©</text><text x="688" y="399.7" font-size="8.80" fill="#2a87b6" textLength="61" lengthAdjust="spacingAndGlyphs">OpenStreetMap</text><text x="752.6" y="399.6" font-size="5.31" fill="#999" textLength="4" lengthAdjust="spacingAndGlyphs">©</text><text x="758.9" y="399.7" font-size="8.80" fill="#2a87b6" textLength="52.2" lengthAdjust="spacingAndGlyphs">DataSymbion</text><rect x="758.1" y="369.3" width="50.6" height="8.8" fill="rgba(255,255,255,0.8)"/><rect x="758.1" y="378.1" width="40.1" height="9.9" fill="rgba(255,255,255,0.8)"/><path d="M758.6 369.3V388M808.2 369.3V378.1M758.1 378.1H808.7M797.7 378.1V388" fill="none" stroke="#858585" stroke-width="1.1"/><text x="762" y="376.5" font-size="6.98" fill="#333" textLength="24" lengthAdjust="spacingAndGlyphs">200 km</text><text x="762" y="386.4" font-size="6.98" fill="#333" textLength="20.5" lengthAdjust="spacingAndGlyphs">100 mi</text></svg></body></html>
